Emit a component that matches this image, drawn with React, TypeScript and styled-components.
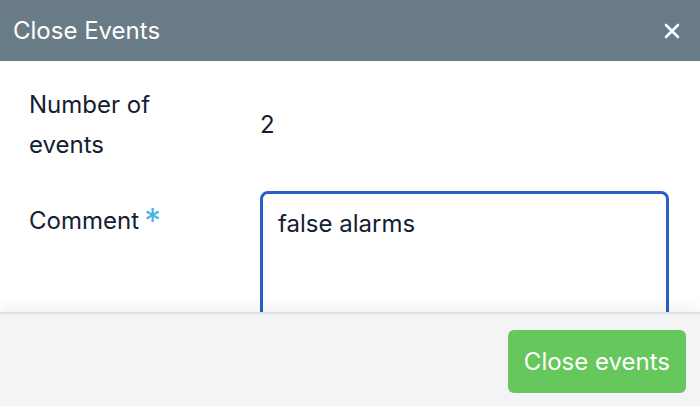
import React, {useState} from 'react';
import styled, {createGlobalStyle} from 'styled-components';

const GlobalStyle = createGlobalStyle`
  html, body {
    margin: 0;
    padding: 0;
    background: #ffffff;
  }
  body {
    font-family: Inter, "Noto Sans", "Liberation Sans", sans-serif;
    color: #142032;
    text-align: left;
  }
  #root, #root * {
    text-align: left;
  }
`

const CloseEvents = () => {
    const [comment, setComment] = useState('false alarms');

    return (
        <Dialog>
            <Header>
                <Title>Close Events</Title>
                <CloseButton aria-label="Close">
                    <svg width="16" height="16" viewBox="0 0 16 16">
                        <path d="M2 2 L14 14 M14 2 L2 14" stroke="#ffffff" strokeWidth="2.6" strokeLinecap="round"/>
                    </svg>
                </CloseButton>
            </Header>
            <Body>
                <Row align={'center'}>
                    <Label>Number of events</Label>
                    <Value>2</Value>
                </Row>
                <Row align={'start'}>
                    <Label offset={10}>
                        Comment<Required>*</Required>
                    </Label>
                    <div>
                        <Comment value={comment} onChange={e => setComment(e.target.value)}/>
                    </div>
                </Row>
            </Body>
            <Footer>
                <PrimaryButton>Close events</PrimaryButton>
            </Footer>
        </Dialog>
    );
};

export default function App() {
    return (
        <>
            <GlobalStyle/>
            <CloseEvents/>
        </>
    );
}

const Dialog = styled.div`
  width: 700px;
  height: 406px;
  display: flex;
  flex-direction: column;
  background: #ffffff;
  overflow: hidden;
`
const Header = styled.header`
  height: 61px;
  flex-shrink: 0;
  display: flex;
  align-items: center;
  justify-content: space-between;
  padding: 0 20px 0 13px;
  background: #6a7b88;
  box-sizing: border-box;
`
const Title = styled.h1`
  margin: 0;
  font-size: 24px;
  font-weight: 400;
  color: #ffffff;
`
const CloseButton = styled.button`
  border: none;
  background: transparent;
  padding: 0;
  display: flex;
  align-items: center;
  cursor: pointer;
`
const Body = styled.section`
  flex: 1;
  overflow: hidden;
  padding: 24px 31px 0 29px;
  display: flex;
  flex-direction: column;
  gap: 26px;
`
const Row = styled.div<{ align: string }>`
  display: grid;
  grid-template-columns: 231px 1fr;
  justify-items: start;
  align-items: ${p => p.align};
`
const Label = styled.div<{ offset?: number }>`
  font-size: 24px;
  line-height: 40px;
  max-width: 165px;
  padding-top: ${p => p.offset || 0}px;
`
const Required = styled.span`
  color: #4bb4e6;
  margin-left: 5px;
  font-size: 34px;
  line-height: 0;
  position: relative;
  top: 4px;
`
const Value = styled.div`
  font-size: 24px;
  line-height: 40px;
`
const Comment = styled.textarea`
  width: 409px;
  height: 150px;
  box-sizing: border-box;
  border: 3px solid #2a5ec8;
  border-radius: 8px;
  padding: 12px 15px;
  font-family: inherit;
  font-size: 24px;
  line-height: 36px;
  color: #142032;
  resize: none;
  outline: none;
  vertical-align: top;
`
const Footer = styled.footer`
  height: 94px;
  flex-shrink: 0;
  box-sizing: border-box;
  background: #f4f4f6;
  border-top: 2px solid #dfe2e8;
  box-shadow: 0 -6px 12px rgba(0, 0, 0, 0.05);
  display: flex;
  align-items: center;
  justify-content: flex-end;
  padding: 2px 14px 0 0;
`
const PrimaryButton = styled.button`
  height: 63px;
  padding: 0 16px;
  border: none;
  border-radius: 6px;
  background: #66c75c;
  color: #ffffff;
  font-family: inherit;
  font-size: 24px;
  cursor: pointer;
`
